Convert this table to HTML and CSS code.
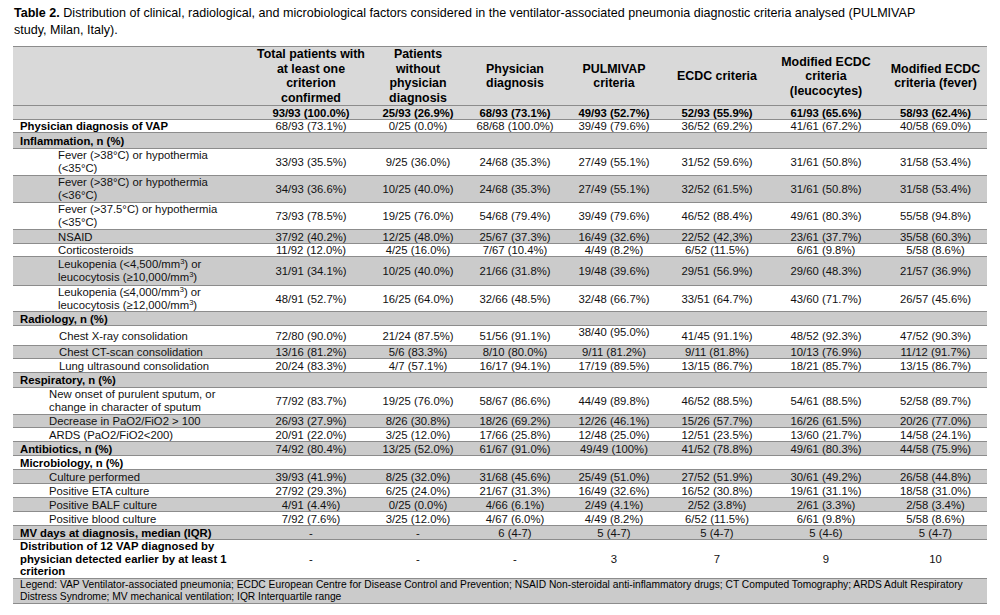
FILE: index.html
```html
<!DOCTYPE html>
<html lang="en">
<head>
<meta charset="utf-8">
<title>Table 2</title>
<link rel="stylesheet" href="styles.css">
</head>
<body>
<div class="page">
  <p class="caption"><b>Table 2.</b> Distribution of clinical, radiological, and microbiological factors considered in the ventilator-associated pneumonia diagnostic criteria analysed (PULMIVAP<br>study, Milan, Italy).</p>
  <table class="tbl">
    <colgroup>
      <col class="c0"><col class="c1"><col class="c2"><col class="c3"><col class="c4"><col class="c5"><col class="c6"><col class="c7">
    </colgroup>
    <thead>
      <tr class="hdr">
        <th></th>
        <th>Total patients with<br>at least one<br>criterion<br>confirmed</th>
        <th>Patients<br>without<br>physician<br>diagnosis</th>
        <th>Physician<br>diagnosis</th>
        <th>PULMIVAP<br>criteria</th>
        <th>ECDC criteria</th>
        <th>Modified ECDC<br>criteria<br>(leucocytes)</th>
        <th>Modified ECDC<br>criteria (fever)</th>
      </tr>
      <tr class="tot">
        <th></th>
        <th>93/93 (100.0%)</th><th>25/93 (26.9%)</th><th>68/93 (73.1%)</th><th>49/93 (52.7%)</th><th>52/93 (55.9%)</th><th>61/93 (65.6%)</th><th>58/93 (62.4%)</th>
      </tr>
    </thead>
    <tbody>
      <tr class="h13">
        <td class="lab b">Physician diagnosis of VAP</td>
        <td>68/93 (73.1%)</td><td>0/25 (0.0%)</td><td>68/68 (100.0%)</td><td>39/49 (79.6%)</td><td>36/52 (69.2%)</td><td>41/61 (67.2%)</td><td>40/58 (69.0%)</td>
      </tr>
      <tr class="g h16">
        <td class="lab b">Inflammation, n (%)</td><td></td><td></td><td></td><td></td><td></td><td></td><td></td>
      </tr>
      <tr class="two">
        <td class="lab i1">Fever (&gt;38°C) or hypothermia<br>(&lt;35°C)</td>
        <td>33/93 (35.5%)</td><td>9/25 (36.0%)</td><td>24/68 (35.3%)</td><td>27/49 (55.1%)</td><td>31/52 (59.6%)</td><td>31/61 (50.8%)</td><td>31/58 (53.4%)</td>
      </tr>
      <tr class="g two">
        <td class="lab i1">Fever (&gt;38°C) or hypothermia<br>(&lt;36°C)</td>
        <td>34/93 (36.6%)</td><td>10/25 (40.0%)</td><td>24/68 (35.3%)</td><td>27/49 (55.1%)</td><td>32/52 (61.5%)</td><td>31/61 (50.8%)</td><td>31/58 (53.4%)</td>
      </tr>
      <tr class="two">
        <td class="lab i1">Fever (&gt;37.5°C) or hypothermia<br>(&lt;35°C)</td>
        <td>73/93 (78.5%)</td><td>19/25 (76.0%)</td><td>54/68 (79.4%)</td><td>39/49 (79.6%)</td><td>46/52 (88.4%)</td><td>49/61 (80.3%)</td><td>55/58 (94.8%)</td>
      </tr>
      <tr class="g h14">
        <td class="lab i1">NSAID</td>
        <td>37/92 (40.2%)</td><td>12/25 (48.0%)</td><td>25/67 (37.3%)</td><td>16/49 (32.6%)</td><td>22/52 (42,3%)</td><td>23/61 (37.7%)</td><td>35/58 (60.3%)</td>
      </tr>
      <tr class="h13">
        <td class="lab i1">Corticosteroids</td>
        <td>11/92 (12.0%)</td><td>4/25 (16.0%)</td><td>7/67 (10.4%)</td><td>4/49 (8.2%)</td><td>6/52 (11.5%)</td><td>6/61 (9.8%)</td><td>5/58 (8.6%)</td>
      </tr>
      <tr class="g leuk1">
        <td class="lab i1">Leukopenia (&lt;4,500/mm<sup>3</sup>) or<br>leucocytosis (≥10,000/mm<sup>3</sup>)</td>
        <td>31/91 (34.1%)</td><td>10/25 (40.0%)</td><td>21/66 (31.8%)</td><td>19/48 (39.6%)</td><td>29/51 (56.9%)</td><td>29/60 (48.3%)</td><td>21/57 (36.9%)</td>
      </tr>
      <tr class="leuk2">
        <td class="lab i1">Leukopenia (≤4,000/mm<sup>3</sup>) or<br>leucocytosis (≥12,000/mm<sup>3</sup>)</td>
        <td>48/91 (52.7%)</td><td>16/25 (64.0%)</td><td>32/66 (48.5%)</td><td>32/48 (66.7%)</td><td>33/51 (64.7%)</td><td>43/60 (71.7%)</td><td>26/57 (45.6%)</td>
      </tr>
      <tr class="g h14">
        <td class="lab b">Radiology, n (%)</td><td></td><td></td><td></td><td></td><td></td><td></td><td></td>
      </tr>
      <tr class="xray">
        <td class="lab i3">Chest X-ray consolidation</td>
        <td>72/80 (90.0%)</td><td>21/24 (87.5%)</td><td>51/56 (91.1%)</td><td class="up">38/40 (95.0%)</td><td>41/45 (91.1%)</td><td>48/52 (92.3%)</td><td>47/52 (90.3%)</td>
      </tr>
      <tr class="g h13">
        <td class="lab i3">Chest CT-scan consolidation</td>
        <td>13/16 (81.2%)</td><td>5/6 (83.3%)</td><td>8/10 (80.0%)</td><td>9/11 (81.2%)</td><td>9/11 (81.8%)</td><td>10/13 (76.9%)</td><td>11/12 (91.7%)</td>
      </tr>
      <tr class="h14">
        <td class="lab i3">Lung ultrasound consolidation</td>
        <td>20/24 (83.3%)</td><td>4/7 (57.1%)</td><td>16/17 (94.1%)</td><td>17/19 (89.5%)</td><td>13/15 (86.7%)</td><td>18/21 (85.7%)</td><td>13/15 (86.7%)</td>
      </tr>
      <tr class="g h15">
        <td class="lab b">Respiratory, n (%)</td><td></td><td></td><td></td><td></td><td></td><td></td><td></td>
      </tr>
      <tr class="two">
        <td class="lab i2">New onset of purulent sputum, or<br>change in character of sputum</td>
        <td>77/92 (83.7%)</td><td>19/25 (76.0%)</td><td>58/67 (86.6%)</td><td>44/49 (89.8%)</td><td>46/52 (88.5%)</td><td>54/61 (88.5%)</td><td>52/58 (89.7%)</td>
      </tr>
      <tr class="g h13">
        <td class="lab i2">Decrease in PaO2/FiO2 &gt; 100</td>
        <td>26/93 (27.9%)</td><td>8/26 (30.8%)</td><td>18/26 (69.2%)</td><td>12/26 (46.1%)</td><td>15/26 (57.7%)</td><td>16/26 (61.5%)</td><td>20/26 (77.0%)</td>
      </tr>
      <tr class="h14">
        <td class="lab i2">ARDS (PaO2/FiO2&lt;200)</td>
        <td>20/91 (22.0%)</td><td>3/25 (12.0%)</td><td>17/66 (25.8%)</td><td>12/48 (25.0%)</td><td>12/51 (23.5%)</td><td>13/60 (21.7%)</td><td>14/58 (24.1%)</td>
      </tr>
      <tr class="g h14">
        <td class="lab b">Antibiotics, n (%)</td>
        <td>74/92 (80.4%)</td><td>13/25 (52.0%)</td><td>61/67 (91.0%)</td><td>49/49 (100%)</td><td>41/52 (78.8%)</td><td>49/61 (80.3%)</td><td>44/58 (75.9%)</td>
      </tr>
      <tr class="h14">
        <td class="lab b">Microbiology, n (%)</td><td></td><td></td><td></td><td></td><td></td><td></td><td></td>
      </tr>
      <tr class="g h14">
        <td class="lab i2">Culture performed</td>
        <td>39/93 (41.9%)</td><td>8/25 (32.0%)</td><td>31/68 (45.6%)</td><td>25/49 (51.0%)</td><td>27/52 (51.9%)</td><td>30/61 (49.2%)</td><td>26/58 (44.8%)</td>
      </tr>
      <tr class="h14">
        <td class="lab i2">Positive ETA culture</td>
        <td>27/92 (29.3%)</td><td>6/25 (24.0%)</td><td>21/67 (31.3%)</td><td>16/49 (32.6%)</td><td>16/52 (30.8%)</td><td>19/61 (31.1%)</td><td>18/58 (31.0%)</td>
      </tr>
      <tr class="g h14">
        <td class="lab i2">Positive BALF culture</td>
        <td>4/91 (4.4%)</td><td>0/25 (0.0%)</td><td>4/66 (6.1%)</td><td>2/49 (4.1%)</td><td>2/52 (3.8%)</td><td>2/61 (3.3%)</td><td>2/58 (3.4%)</td>
      </tr>
      <tr class="h14">
        <td class="lab i2">Positive blood culture</td>
        <td>7/92 (7.6%)</td><td>3/25 (12.0%)</td><td>4/67 (6.0%)</td><td>4/49 (8.2%)</td><td>6/52 (11.5%)</td><td>6/61 (9.8%)</td><td>5/58 (8.6%)</td>
      </tr>
      <tr class="g h14">
        <td class="lab b">MV days at diagnosis, median (IQR)</td>
        <td>-</td><td>-</td><td>6 (4-7)</td><td>5 (4-7)</td><td>5 (4-7)</td><td>5 (4-6)</td><td>5 (4-7)</td>
      </tr>
      <tr class="dist">
        <td class="lab b">Distribution of 12 VAP diagnosed by<br>physician detected earlier by at least 1<br>criterion</td>
        <td>-</td><td>-</td><td>-</td><td>3</td><td>7</td><td>9</td><td>10</td>
      </tr>
      <tr class="g legend">
        <td class="lab" colspan="8">Legend: VAP Ventilator-associated pneumonia; ECDC European Centre for Disease Control and Prevention; NSAID Non-steroidal anti-inflammatory drugs; CT Computed Tomography; ARDS Adult Respiratory<br>Distress Syndrome; MV mechanical ventilation; IQR Interquartile range</td>
      </tr>
    </tbody>
  </table>
</div>
</body>
</html>
```

FILE: styles.css
```css
* { box-sizing: border-box; }
body {
  margin: 0;
  background: #fff;
  color: #000;
  font-family: "Liberation Sans", Arial, sans-serif;
}
.page { padding: 5px 13px 0 13px; }
.caption {
  margin: 0 0 8px 1px;
  font-size: 12.55px;
  line-height: 16.7px;
}
.tbl {
  width: 974px;
  border-collapse: collapse;
  table-layout: fixed;
  font-size: 11.3px;
  border-top: 1px solid #8c8c8c;
}
.c0 { width: 241px; }
.c1 { width: 114px; }
.c2 { width: 100px; }
.c3 { width: 94px; }
.c4 { width: 104px; }
.c5 { width: 102px; }
.c6 { width: 116px; }
.c7 { width: 103px; }

.tbl th, .tbl td {
  padding: 0;
  border-bottom: 1px solid #8c8c8c;
  text-align: center;
  vertical-align: middle;
  line-height: 12px;
  white-space: nowrap;
  color: #111;
}
.tbl .hdr th {
  background: #d9d9d9;
  font-size: 12.4px;
  line-height: 14.5px;
  height: 59px;
  color: #000;
}
.tbl .tot th {
  background: #d9d9d9;
  height: 14px;
  color: #000;
}
.tbl .g td { background: #cbcbcb; }
.tbl .h13 td { height: 13px; }
.tbl .h14 td { height: 14px; }
.tbl .h15 td { height: 15px; }
.tbl .h16 td { height: 16px; }
.tbl .two td { height: 27px; }
.tbl .two .lab { line-height: 13px; }
.tbl .leuk1 td { height: 29px; }
.tbl .leuk1 .lab { line-height: 13px; }
.tbl .leuk2 td { height: 26px; }
.tbl .leuk2 .lab { line-height: 12.5px; }
.tbl .xray td { height: 20px; }
.tbl .xray .up { vertical-align: top; padding-top: 0; }
.tbl .dist td { height: 38px; }
.tbl .dist .lab { line-height: 12.5px; }
.tbl .legend td { height: 25px; }
.tbl .legend .lab {
  font-size: 10.25px;
  line-height: 11.5px;
  padding-left: 7px;
  color: #000;
}

.tbl .lab { text-align: left; }
.tbl .b { font-weight: bold; padding-left: 7px; color: #000; }
.tbl .i1 { padding-left: 45px; }
.tbl .i3 { padding-left: 46px; }
.tbl .i2 { padding-left: 36px; }

sup {
  font-size: 7.5px;
  line-height: 0;
  vertical-align: 4px;
}
```
